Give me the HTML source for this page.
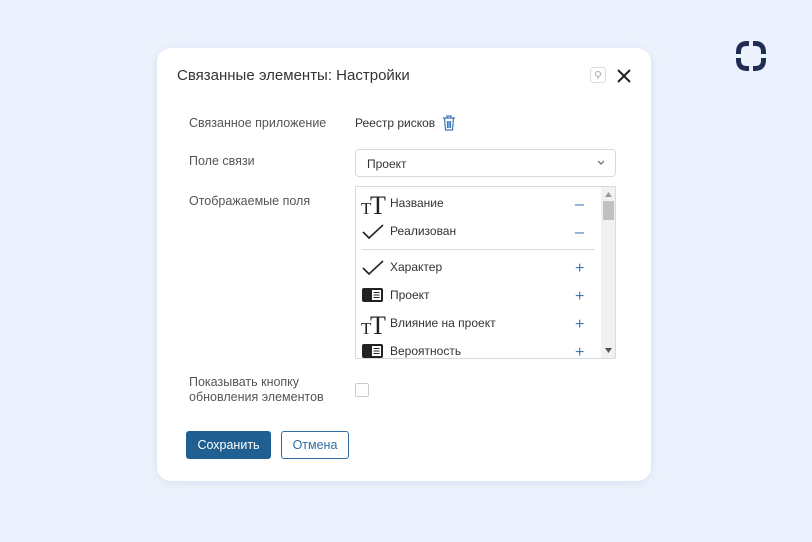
<!DOCTYPE html>
<html><head><meta charset="utf-8"><style>
*{box-sizing:border-box;margin:0;padding:0}
body{width:812px;height:542px;background:#ecf2fd;font-family:"Liberation Sans",sans-serif;position:relative;overflow:hidden;color:#333}
.dlg{position:absolute;left:157px;top:48px;width:494px;height:433px;background:#fff;border-radius:14px;box-shadow:0 2px 12px rgba(100,120,160,.12)}
.a{position:absolute;font-size:12.5px;color:#555}
.title{position:absolute;left:20px;top:19px;font-size:15px;color:#333}
.help{position:absolute;left:433px;top:19px;width:16px;height:16px;border:1px solid #ddd;border-radius:3px}
.sel{position:absolute;left:198px;top:101px;width:261px;height:28px;border:1px solid #d6d9de;border-radius:4px;font-size:12px;padding:7px 11px;color:#333}
.list{position:absolute;left:198px;top:138px;width:261px;height:173px;border:1px solid #d6d9de;overflow:hidden}
.row{position:absolute;left:0;width:245px;height:28px;font-size:12px;color:#333}
.row span{position:absolute;left:34px;top:7px}
.row .op{position:absolute;left:219px;top:7px;font-size:16px;color:#3a78b5}
.ic{position:absolute;left:5px;top:5px}
.sb{position:absolute;left:245px;top:0;width:15px;height:171px;background:#f1f1f1}
.btn1{position:absolute;left:29px;top:383px;width:85px;height:28px;background:#1f5f91;border-radius:3px;color:#fff;font-size:12.5px;text-align:center;line-height:28px}
.btn2{position:absolute;left:124px;top:383px;width:68px;height:28px;border:1px solid #2f6da3;border-radius:3px;color:#2f6da3;font-size:12.5px;text-align:center;line-height:26px}
</style></head><body>
<svg style="position:absolute;left:734px;top:39px" width="34" height="34" viewBox="0 0 34 34" fill="none" stroke="#1f2d52" stroke-width="5">
<path d="M4.5 15 V13 Q4.5 4.5 13 4.5 H15"/><path d="M19 4.5 H21 Q29.5 4.5 29.5 13 V15"/><path d="M29.5 19 V21 Q29.5 29.5 21 29.5 H19"/><path d="M15 29.5 H13 Q4.5 29.5 4.5 21 V19"/>
</svg>
<div class="dlg">
<div class="title">Связанные элементы: Настройки</div>
<div class="help"><svg width="14" height="14" viewBox="0 0 14 14"><circle cx="7" cy="6" r="2.5" fill="none" stroke="#aaa"/><path d="M7 9v2" stroke="#aaa"/></svg></div>
<svg style="position:absolute;left:460px;top:21px" width="14" height="14" viewBox="0 0 14 14"><path d="M1 1L13 13M13 1L1 13" stroke="#222" stroke-width="2"/></svg>
<div class="a" style="left:32px;top:68px">Связанное приложение</div>
<div class="a" style="left:198px;top:68px;font-size:12px;color:#333">Реестр рисков</div>
<svg style="position:absolute;left:285px;top:67px" width="14" height="16" viewBox="0 0 14 16" fill="none" stroke="#3a78b5" stroke-width="1.2"><path d="M1 3h12M5 3V1h4v2M2.5 3.5l1 11.5h7l1-11.5M5.5 6v7M7 6v7M8.5 6v7"/></svg>
<div class="a" style="left:32px;top:106px">Поле связи</div>
<div class="sel">Проект<svg style="position:absolute;right:10px;top:10px" width="8" height="6"><path d="M1 1l3 3 3-3" stroke="#555" fill="none"/></svg></div>
<div class="a" style="left:32px;top:146px">Отображаемые поля</div>
<div class="list">
<div class="row" style="top:2px"><svg class="ic" width="28" height="22"><text x="0" y="20" font-family="Liberation Serif" font-size="17" fill="#222">T</text><text x="9" y="20" font-family="Liberation Serif" font-size="26" fill="#222">T</text></svg><span>Название</span><div class="op">–</div></div>
<div class="row" style="top:30px"><svg class="ic" width="24" height="18"><path d="M2 10l6 6L22 3" stroke="#222" stroke-width="1.6" fill="none"/></svg><span>Реализован</span><div class="op">–</div></div>
<div style="position:absolute;left:6px;top:62px;width:233px;height:1px;background:#ddd"></div>
<div class="row" style="top:66px"><svg class="ic" width="24" height="18"><path d="M2 10l6 6L22 3" stroke="#222" stroke-width="1.6" fill="none"/></svg><span>Характер</span><div class="op">+</div></div>
<div class="row" style="top:94px"><svg class="ic" width="24" height="18"><rect x="1" y="2" width="21" height="14" rx="2" fill="#222"/><rect x="11" y="4" width="9" height="10" fill="#fff"/><path d="M12.5 6.5h6M12.5 9h6M12.5 11.5h6" stroke="#222"/></svg><span>Проект</span><div class="op">+</div></div>
<div class="row" style="top:122px"><svg class="ic" width="28" height="22"><text x="0" y="20" font-family="Liberation Serif" font-size="17" fill="#222">T</text><text x="9" y="20" font-family="Liberation Serif" font-size="26" fill="#222">T</text></svg><span>Влияние на проект</span><div class="op">+</div></div>
<div class="row" style="top:150px"><svg class="ic" width="24" height="18"><rect x="1" y="2" width="21" height="14" rx="2" fill="#222"/><rect x="11" y="4" width="9" height="10" fill="#fff"/><path d="M12.5 6.5h6M12.5 9h6M12.5 11.5h6" stroke="#222"/></svg><span>Вероятность</span><div class="op">+</div></div>
<div class="sb"><svg style="position:absolute;left:4px;top:5px" width="7" height="5"><path d="M0 5L3.5 0 7 5z" fill="#999"/></svg><div style="position:absolute;left:2px;top:14px;width:11px;height:19px;background:#c1c1c1"></div><svg style="position:absolute;left:4px;top:161px" width="7" height="5"><path d="M0 0L3.5 5 7 0z" fill="#555"/></svg></div>
</div>
<div class="a" style="left:32px;top:327px;line-height:15px">Показывать кнопку<br>обновления элементов</div>
<div style="position:absolute;left:198px;top:335px;width:14px;height:14px;border:1px solid #ccc;border-radius:2px"></div>
<div class="btn1">Сохранить</div>
<div class="btn2">Отмена</div>
</div>
</body></html>
